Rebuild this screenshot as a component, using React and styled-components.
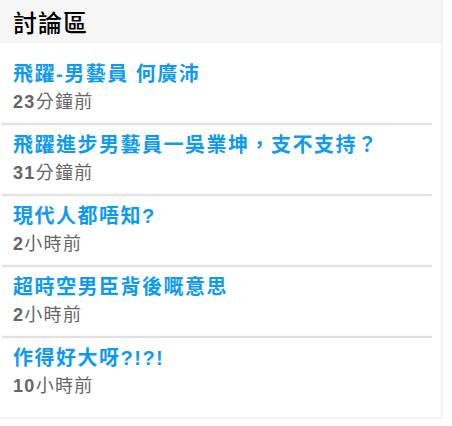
import React from "react";
import styled, { createGlobalStyle } from "styled-components";

const GlobalStyle = createGlobalStyle`
  body {
    margin: 0;
    background: #ffffff;
    font-family: "Liberation Sans", "Noto Sans CJK TC", sans-serif;
  }
`;

const posts = [
  { title: "飛躍-男藝員 何廣沛", num: "23", unit: "分鐘前" },
  { title: "飛躍進步男藝員一吳業坤，支不支持？", num: "31", unit: "分鐘前" },
  { title: "現代人都唔知?", num: "2", unit: "小時前" },
  { title: "超時空男臣背後嘅意思", num: "2", unit: "小時前" },
  { title: "作得好大呀?!?!", num: "10", unit: "小時前" },
];

const App = () => {
  return (
    <>
      <GlobalStyle />
      <Panel>
        <Header>
          <Heading>討論區</Heading>
        </Header>
        <Body>
          {posts.map((post, i) => (
            <React.Fragment key={i}>
              {i > 0 && <Divider />}
              <Item>
                <Title href="#">{post.title}</Title>
                <Time>
                  <Num>{post.num}</Num>
                  {post.unit}
                </Time>
              </Item>
            </React.Fragment>
          ))}
        </Body>
      </Panel>
    </>
  );
};

export default App;

const Panel = styled.div`
  width: 441px;
  padding: 0 2px 2px 0;
  background: #f4f4f4;
`;

const Header = styled.div`
  height: 43px;
  display: flex;
  align-items: center;
  padding-left: 13px;
  background: #f5f5f5;
`;

const Heading = styled.h2`
  margin: 0;
  font-family: "Noto Sans CJK TC", serif;
  font-size: 24px;
  font-weight: 500;
  letter-spacing: 1px;
  color: #000;
`;

const Body = styled.div`
  background: #ffffff;
  padding: 11px 0 10px;
`;

const Divider = styled.div`
  height: 2px;
  margin: 0 9px 0 2px;
  background: #e2e2e2;
  box-shadow: 0 0 2px #ececec;
`;

const Item = styled.div`
  display: flex;
  flex-direction: column;
  padding: 5px 13px 8px;
`;

const Title = styled.a`
  font-size: 20px;
  line-height: 30px;
  font-weight: bold;
  letter-spacing: 1.5px;
  color: #0f9af2;
  text-decoration: none;
  white-space: nowrap;
`;

const Time = styled.div`
  font-size: 18px;
  line-height: 26px;
  letter-spacing: 1.3px;
  color: #666666;
`;

const Num = styled.span`
  font-weight: bold;
`;
